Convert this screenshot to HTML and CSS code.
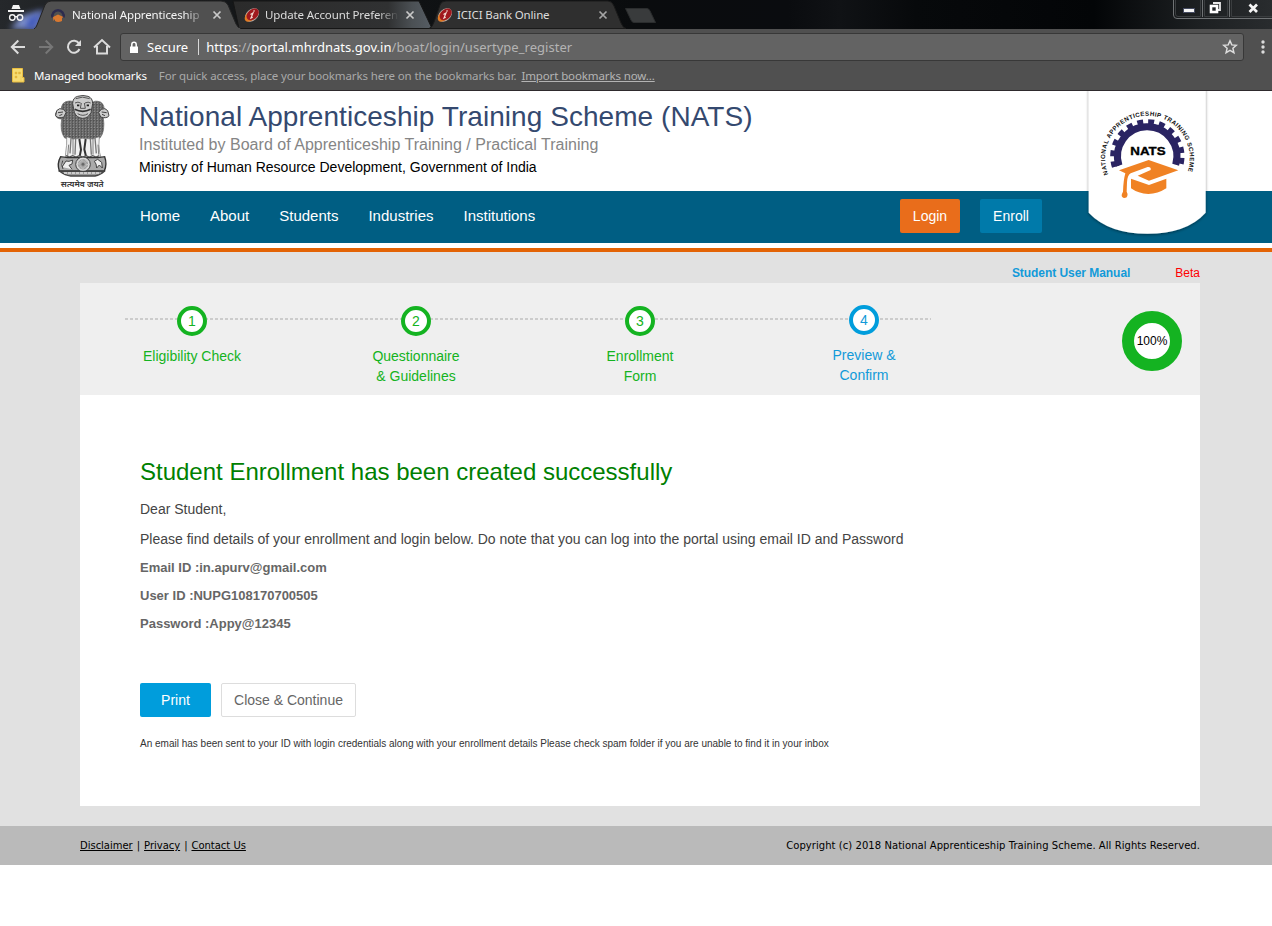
FILE: index.html
```
<!DOCTYPE html>
<html lang="en">
<head>
<meta charset="utf-8">
<title>National Apprenticeship Training Scheme</title>
<link rel="stylesheet" href="styles.css">
</head>
<body>
<div class="browser">
  <div class="tabstrip">
    <svg class="tab-shapes" width="1272" height="29" viewBox="0 0 1272 29">
      <defs>
        <linearGradient id="strip" x1="0" x2="1" y1="0" y2="0">
          <stop offset="0" stop-color="#25282b"/><stop offset=".12" stop-color="#17191b"/><stop offset=".5" stop-color="#0a0c0e"/><stop offset=".62" stop-color="#0a0c0f"/><stop offset=".66" stop-color="#101215"/><stop offset=".72" stop-color="#07090b"/><stop offset=".86" stop-color="#030507"/><stop offset=".94" stop-color="#1c1f21"/><stop offset="1" stop-color="#292c2e"/>
        </linearGradient>
        <linearGradient id="idle" x1="0" x2="1" y1="0" y2="0">
          <stop offset="0" stop-color="#2b2b2b"/><stop offset=".78" stop-color="#303132"/><stop offset=".9" stop-color="#4b5054"/><stop offset="1" stop-color="#565d64"/>
        </linearGradient>
        <filter id="soft" x="-50%" y="-50%" width="200%" height="200%"><feGaussianBlur stdDeviation="3"/></filter>
        <g id="bank">
          <ellipse cx="8" cy="8" rx="8" ry="5.600" transform="rotate(-42 8 8)" fill="#b9aba5"/>
          <ellipse cx="6.700" cy="9" rx="7" ry="4.400" transform="rotate(-42 6.700 9)" fill="#e07a24"/>
          <ellipse cx="8.700" cy="7.400" rx="7" ry="4.800" transform="rotate(-42 8.700 7.400)" fill="#a0181e"/>
          <path d="M10.500 3.500l-1 1M6.500 7.500l2.500-1.500-2 5 1.700-.8" stroke="#f3dcd4" stroke-width="1.200" fill="none"/>
        </g>
      </defs>
      <rect width="1272" height="29" fill="url(#strip)"/>
      <path d="M10 29L22 16 44 10 38 29z" fill="#8093d0" filter="url(#soft)"/>
      <path d="M25 29L29 18 42 12 34 29z" fill="#3e55b8" filter="url(#soft)"/>
      <path d="M233 1H419L432 28.500H239z" fill="url(#idle)" stroke="#161616"/>
      <path d="M429 28.500Q432 28 434 22L440 5Q441 1 446 1H608Q612 1 614 6L621 23Q623 28 626 28.500z" fill="#2f2f2f" stroke="#1a1a1a"/>
      <path d="M34 29Q36 28 37 25L45 5Q47 1 51 1H221Q226 1 228 5L236 24Q238 28 241 29z" fill="#505050" stroke="#232323"/>
      <rect x="35" y="28" width="205" height="2" fill="#505050"/>
      <path d="M625.500 8.500H647Q649 8.500 650 11L655.500 22.500H634Q632 22.500 631 20z" fill="#393b3c" stroke="#2b2d2e"/>
      <g fill="#f3f3f3">
        <path d="M11.500 9L13 5H19L20.500 9zM8 10H24V12H8z"/>
        <g fill="none" stroke="#f3f3f3" stroke-width="1.400"><circle cx="12.300" cy="17.500" r="2.700"/><circle cx="20" cy="17.500" r="2.700"/><path d="M15 16.700h2"/></g>
      </g>
      <g transform="translate(50 7)">
        <path d="M2.500 10.500A5.700 5.700 0 1 1 13.500 10.500" fill="none" stroke="#2c2b4e" stroke-width="2.500"/>
        <path d="M3 10L8 7.500 13.500 10 12 11V14Q8 16 5 14V12L3.500 14z" fill="#d87830"/>
      </g>
      <use href="#bank" x="244" y="7"/><use href="#bank" x="437" y="7"/>
      <g stroke="#c9c9c9" stroke-width="1.700"><path d="M213.500 11.500l7 7m0-7l-7 7M406.500 11.500l7 7m0-7l-7 7"/><path d="M599.500 11.500l7 7m0-7l-7 7" stroke="#a6a6a6"/></g>
      <path d="M1173.500 0V15Q1173.500 18.500 1177 18.500H1272M1202.500 0V17M1229.500 0V17" fill="none" stroke="#6f7274"/>
      <path d="M1175.500 0V14Q1175.500 16.500 1178 16.500H1200.500V0M1204.500 0V16.500H1227.500V0M1231.500 0V16.500H1272" fill="none" stroke="#3a3d3f"/>
      <rect x="1183.500" y="8.500" width="11" height="4" fill="#f4f4f4" stroke="#444a60"/>
      <path d="M1213 3h7v7h-2" fill="none" stroke="#e9e9e9" stroke-width="1.800"/><rect x="1211" y="6" width="6" height="6" fill="none" stroke="#fff" stroke-width="2.600"/>
      <path d="M1249.500 4.500l7.500 7.500m0-7.500l-7.500 7.500" stroke="#f5f5f5" stroke-width="2.700"/>
    </svg>
    <div class="tab tab-active">National Apprenticeship</div>
    <div class="tab tab-second">Update Account Preferen</div>
    <div class="tab tab-third">ICICI Bank Online</div>
  </div>
  <div class="toolbar">
    <svg class="nav-icons" width="120" height="34" viewBox="0 0 120 34" fill="none" stroke="#dcdcdc" stroke-width="2">
      <path d="M25 19H12M18.300 12.500L11.800 19l6.500 6.500"/>
      <path d="M39 19H52M45.700 12.500L52.200 19l-6.500 6.500" stroke="#777"/>
      <path d="M79 15.500A6 6 0 1 0 79.500 21"/><path d="M81 12v6h-6z" fill="#dcdcdc" stroke="none"/>
      <path d="M94 19.500L102 12l8 7.500M97 18v7.500h10V18"/>
    </svg>
    <div class="omnibox">
      <svg class="lock" width="10" height="13" viewBox="0 0 10 13"><path d="M1 5.500h8V12H1z" fill="#fff"/><path d="M2.800 6V3.500a2.200 2.200 0 0 1 4.400 0V6" fill="none" stroke="#fff" stroke-width="1.500"/></svg>
      <span class="secure">Secure</span><span class="divider"></span>
      <span class="url">https<i>://</i>portal.mhrdnats.gov.in<i>/boat/login/usertype_register</i></span>
      <svg class="star" width="16" height="16" viewBox="0 0 16 16"><path d="M8 1.800l1.800 4.100 4.500.4-3.400 3 1 4.400L8 11.400l-3.900 2.300 1-4.400-3.400-3 4.500-.4z" fill="none" stroke="#ddd" stroke-width="1.500"/></svg>
    </div>
    <svg class="more" width="6" height="16" viewBox="0 0 6 16" fill="#dcdcdc"><circle cx="3" cy="3" r="1.700"/><circle cx="3" cy="8" r="1.700"/><circle cx="3" cy="13" r="1.700"/></svg>
  </div>
  <div class="bookmarks">
    <svg width="13" height="15" viewBox="0 0 13 15"><path d="M.5.500h10v9h1.500v4.500H.5z" fill="#f7dc72" stroke="#e9bd3f"/><path d="M3 4h2v2H3zM6.500 4h2v2h-2zM3 8h2v2H3zM9 8v5" fill="#e3b63c" stroke="#e3b63c" stroke-width=".4"/></svg>
    <span class="managed">Managed bookmarks</span>
    <span class="hint">For quick access, place your bookmarks here on the bookmarks bar.</span>
    <a class="import">Import bookmarks now...</a>
  </div>
</div>

<header class="masthead">
  <svg class="emblem" width="100" height="100" viewBox="0 9 300 300">
    <defs>
      <pattern id="fur" width="9" height="8" patternUnits="userSpaceOnUse"><rect width="9" height="8" fill="#6c6c6c"/><path d="M0 1Q4 9 8 1M4 6l4-4" stroke="#303030" stroke-width="2" fill="none"/><path d="M1 7l3-4" stroke="#ddd" stroke-width="1.700"/></pattern>
    </defs>
    <path d="M64 68Q62 40 88 39Q101 38 106 50L152 50Q158 37 174 40Q192 42 193 66Q207 73 204 86L190 88Q196 132 180 150L160 154H94L74 150Q59 130 65 93Q47 93 46 78Q47 69 64 68z" fill="url(#fur)" stroke="#666" stroke-width="2"/>
    <path d="M50 68q8-10 20-4l8 9-6 14q-18 6-25-4zM203 68q-7-10-19-4l-8 9 6 14q18 6 25-4z" fill="#ccc" stroke="#444" stroke-width="3"/>
    <path d="M54 74l15-2M58 83l9-4M200 74l-15-2M195 83l-9-4" stroke="#444" stroke-width="3"/>
    <path d="M98 47Q98 29 113 25Q129 20 144 25Q158 30 158 47L153 74Q144 91 128 91Q110 90 103 73z" fill="#ccc" stroke="#444" stroke-width="3"/>
    <path d="M107 32q20-9 42 0M105 45q9-5 17 0M135 45q10-5 17 0M124 45l-3 16h15l-3-16M113 77q16 10 31 0" fill="none" stroke="#555" stroke-width="3"/>
    <path d="M104 64q24 12 48 0" fill="none" stroke="#333" stroke-width="5"/>
    <path d="M111 52h7M140 52h7" stroke="#222" stroke-width="5"/>
    <path d="M80 146Q81 174 77 194L76 208H183L179 194Q175 170 178 146L157 153 128 151 99 153z" fill="#f2f2f2" stroke="#777" stroke-width="2"/>
    <path d="M93 151L90 196M107 151L105 200M151 151L154 200M165 150L169 196" fill="none" stroke="#777" stroke-width="4"/>
    <path d="M118 153L123 185 119 205M137 153L133 184 138 205" fill="none" stroke="#333" stroke-width="6"/>
    <path d="M99 152v48M159 152v48M86 170l-3 34M174 170l2 30" fill="none" stroke="#444" stroke-width="2"/>
    <path d="M78 203l10 4 10-4 10 4 10-4 10 4 10-4 10 4 10-4 10 4 10-4" fill="none" stroke="#555" stroke-width="4"/>
    <path d="M62 206Q50 227 58 249L193 249Q202 228 194 206L174 209H83z" fill="#aaa" stroke="#333" stroke-width="4"/>
    <path d="M68 218q-6 12 1 25M66 237l12-18 9 1 11-4-2 12-9 4 9 12M163 220l10-6 12 9 2 17-9-9-8 9-2-12z" fill="#eee" stroke="#444" stroke-width="3"/>
    <circle cx="129" cy="229" r="22" fill="#d0d0d0" stroke="#444" stroke-width="3"/><circle cx="129" cy="229" r="17" fill="#999" stroke="#eee" stroke-width="2"/><circle cx="129" cy="229" r="11" fill="none" stroke="#ccc" stroke-width="8" stroke-dasharray="1.500 2"/><circle cx="129" cy="229" r="4" fill="#666"/>
    <path d="M59 250Q76 263 92 264H165Q182 261 193 250z" fill="#999" stroke="#444" stroke-width="4"/><path d="M72 255H181" stroke="#ddd" stroke-width="4" stroke-dasharray="9 3"/>
    <text class="motto" x="62" y="298" textLength="129" lengthAdjust="spacingAndGlyphs">सत्यमेव जयते</text>
  </svg>
  <div class="titles">
    <h1>National Apprenticeship Training Scheme (NATS)</h1>
    <p class="board">Instituted by Board of Apprenticeship Training / Practical Training</p>
    <p class="ministry">Ministry of Human Resource Development, Government of India</p>
  </div>
  <svg class="badge" width="150" height="162" viewBox="0 9 450 486">
    <defs>
      <path id="ring" d="M115 259A127 127 0 1 1 351 256"/>
      <filter id="shadow" x="-10%" y="-10%" width="120%" height="120%"><feDropShadow dx="0" dy="3" stdDeviation="4" flood-color="#000" flood-opacity=".45"/></filter>
    </defs>
    <path d="M56 0H407V374Q350 437 232 437Q116 437 56 374z" fill="#fff" filter="url(#shadow)"/>
    <path d="M147 233A89 89 0 1 1 317 230" fill="none" stroke="#2a2463" stroke-width="21"/>
    <path d="M137 236A100 100 0 1 1 328 233" fill="none" stroke="#2a2463" stroke-width="23" stroke-dasharray="17 14.800"/>
    <text class="ring-text"><textPath href="#ring" textLength="488">NATIONAL APPRENTICESHIP TRAINING SCHEME</textPath></text>
    <text class="nats" x="181" y="201" textLength="106" lengthAdjust="spacingAndGlyphs">NATS</text>
    <path d="M147 247L236 216L325 247L237 278L203 263L242 246Q244 236 233 237L182 256Q172 262 171 283L170 311Q174 317 172 324Q171 330 163 330Q155 329 155 321Q156 316 159 311Q160 277 166 256z" fill="#f08224"/>
    <path d="M183 272L237 291L289 272V301Q263 318 235 318Q205 317 183 301z" fill="#f08224"/>
  </svg>
</header>

<nav class="menu">
  <a>Home</a><a>About</a><a>Students</a><a>Industries</a><a>Institutions</a>
  <span class="auth"><a class="login">Login</a><a class="enroll">Enroll</a></span>
</nav>

<main class="content">
  <div class="top-links"><a class="manual">Student User Manual</a><span class="beta">Beta</span></div>
  <section class="steps">
    <ol class="track">
      <li><b>1</b><span>Eligibility Check</span></li>
      <li><b>2</b><span>Questionnaire<br>&amp; Guidelines</span></li>
      <li><b>3</b><span>Enrollment<br>Form</span></li>
      <li class="current"><b>4</b><span>Preview &amp;<br>Confirm</span></li>
    </ol>
    <div class="percent">100%</div>
  </section>
  <section class="panel">
    <h2>Student Enrollment has been created successfully</h2>
    <p class="dear">Dear Student,</p>
    <p class="intro">Please find details of your enrollment and login below. Do note that you can log into the portal using email ID and Password</p>
    <p class="cred">Email ID :in.apurv@gmail.com</p>
    <p class="cred">User ID :NUPG108170700505</p>
    <p class="cred">Password :Appy@12345</p>
    <div class="actions"><button class="print">Print</button><button class="close">Close &amp; Continue</button></div>
    <p class="note">An email has been sent to your ID with login credentials along with your enrollment details Please check spam folder if you are unable to find it in your inbox</p>
  </section>
</main>

<footer class="footer">
  <div class="legal"><a>Disclaimer</a><span>|</span><a>Privacy</a><span>|</span><a>Contact Us</a></div>
  <div class="copyright">Copyright (c) 2018 National Apprenticeship Training Scheme. All Rights Reserved.</div>
</footer>
</body>
</html>
```
FILE: styles.css
```
* { box-sizing: border-box; }
body { margin: 0; width: 1272px; height: 926px; overflow: hidden; background: #fff; font-family: "Liberation Sans", sans-serif; color: #000; }
p, h1, h2, ol { margin: 0; padding: 0; font-weight: normal; }
svg { display: block; flex: none; }

.browser { height: 91px; background: #505050; border-bottom: 1px solid #2e2a2d; font-family: "Noto Sans", sans-serif; }
.tabstrip { position: relative; display: flex; height: 28px; padding-left: 72px; }
.tab-shapes { position: absolute; left: 0; top: 0; }
.tab { position: relative; height: 28px; line-height: 29px; font-size: 11.500px; letter-spacing: -.12px; white-space: nowrap; overflow: hidden; color: #dcdcdc; }
.tab-active { width: 193px; color: #f5f5f5; }
.tab-second { width: 192px; }
.tab-active, .tab-second { -webkit-mask-image: linear-gradient(90deg, #000 112px, transparent 134px); mask-image: linear-gradient(90deg, #000 112px, transparent 134px); }
.tab-third { width: 140px; letter-spacing: -.15px; }

.toolbar { display: flex; height: 34px; align-items: center; }
.omnibox { display: flex; align-items: center; width: 1124px; height: 28px; margin-top: 4px; padding: 0 5px 0 8px; background: #636363; border: 1px solid #383838; border-radius: 3px; font-size: 13px; color: #fff; white-space: nowrap; }
.secure { margin-left: 8px; }
.divider { width: 1px; height: 16px; margin: 0 7px 0 10px; background: #d8d8d8; }
.url { letter-spacing: .03px; }
.url i { font-style: normal; color: #b4b4b4; }
.star { margin-left: auto; }
.more { margin: 4px 0 0 16px; }

.bookmarks { display: flex; align-items: center; height: 27px; padding-left: 12px; font-size: 11.500px; letter-spacing: -.115px; white-space: nowrap; color: #a9a9a9; }
.managed { margin-left: 9px; color: #fff; }
.hint { margin-left: 12px; }
.import { margin-left: 5px; color: #b4b4b4; text-decoration: underline; }

.masthead { position: relative; display: flex; height: 100px; padding-left: 40px; }
.motto { font: 600 24px "Noto Sans Devanagari", "Noto Sans", sans-serif; fill: #333; }
.titles { padding-top: 9px; margin-left: -1px; white-space: nowrap; }
.titles h1 { font-size: 28px; line-height: 33px; letter-spacing: .055px; color: #34496f; }
.board { margin-top: 1px; font-size: 16px; line-height: 22px; letter-spacing: .02px; color: #858585; }
.ministry { font-size: 14px; line-height: 23px; }
.badge { position: absolute; left: 1070px; top: 0; z-index: 2; }
.ring-text { font: bold 18.500px "Liberation Sans", sans-serif; fill: #111; }
.nats { font: bold 34px "Liberation Sans", sans-serif; fill: #000; stroke: #000; stroke-width: 1px; }

.menu { display: flex; align-items: center; height: 52px; padding: 0 230px 2px 140px; gap: 30px; background: #005e83; font-size: 15px; line-height: 18px; color: #fff; }
.auth { display: flex; gap: 20px; margin-left: auto; font-size: 14px; }
.auth a { height: 34px; line-height: 34px; text-align: center; border-radius: 2px; }
.login { width: 60px; background: #e96d1b; }
.enroll { width: 62px; background: #007aaa; }

.content { height: 583px; border-top: 5px solid #fff; background: linear-gradient(#e36305 4px, #e1e1e1 4px); padding: 4px 72px 20px 80px; }
.top-links { display: flex; justify-content: flex-end; gap: 45px; height: 31px; line-height: 42px; font-size: 12px; }
.manual { font-weight: bold; letter-spacing: -.05px; color: #129ad9; }
.beta { color: #f00; }
.steps { display: flex; height: 112px; background: #efefef; justify-content: space-between; padding-right: 18px; }
.track { display: flex; list-style: none; width: 896px; background: repeating-linear-gradient(90deg, #ccc 0 3px, transparent 3px 5px) 45px 35px / 806px 2px no-repeat; }
.track li { width: 224px; padding-top: 23px; text-align: center; font-size: 14px; line-height: 20px; color: #14b321; }
.track b { display: block; width: 30px; height: 30px; margin: 0 auto 10px; border: 4px solid #14b321; border-radius: 50%; background: #fff; font-weight: normal; line-height: 22px; }
.track .current { padding-top: 22px; color: #129ad9; }
.track .current b { border-color: #009ddc; }
.percent { width: 60px; height: 60px; margin-top: 28px; border: 12px solid #14b321; border-radius: 50%; background: #fff; font-size: 12px; line-height: 36px; display: flex; justify-content: center; }

.panel { height: 411px; background: #fff; padding: 62px 60px 0; color: #444; white-space: nowrap; }
.panel h2 { font-size: 24px; line-height: 30px; color: #008000; }
.dear { margin-top: 12px; font-size: 14px; line-height: 20px; }
.intro { margin: 10px 0 5px; font-size: 14px; line-height: 20px; }
.cred { font-size: 13px; font-weight: bold; line-height: 28px; color: #666; }
.actions { display: flex; gap: 10px; margin-top: 45px; }
.actions button { height: 34px; padding: 0; font: 14px "Liberation Sans", sans-serif; border-radius: 2px; }
.print { width: 71px; border: 0; background: #009ddc; color: #fff; }
.close { width: 135px; border: 1px solid #ddd; background: #fff; color: #666; }
.note { margin-top: 20px; font-size: 10px; line-height: 14px; color: #333; }

.footer { display: flex; justify-content: space-between; height: 39px; padding: 0 72px 0 80px; background: #bababa; font: 10px/39px "DejaVu Sans", sans-serif; }
.legal { display: flex; gap: 4px; letter-spacing: -.02px; }
.legal a { text-decoration: underline; }
.copyright { letter-spacing: .055px; }
```
